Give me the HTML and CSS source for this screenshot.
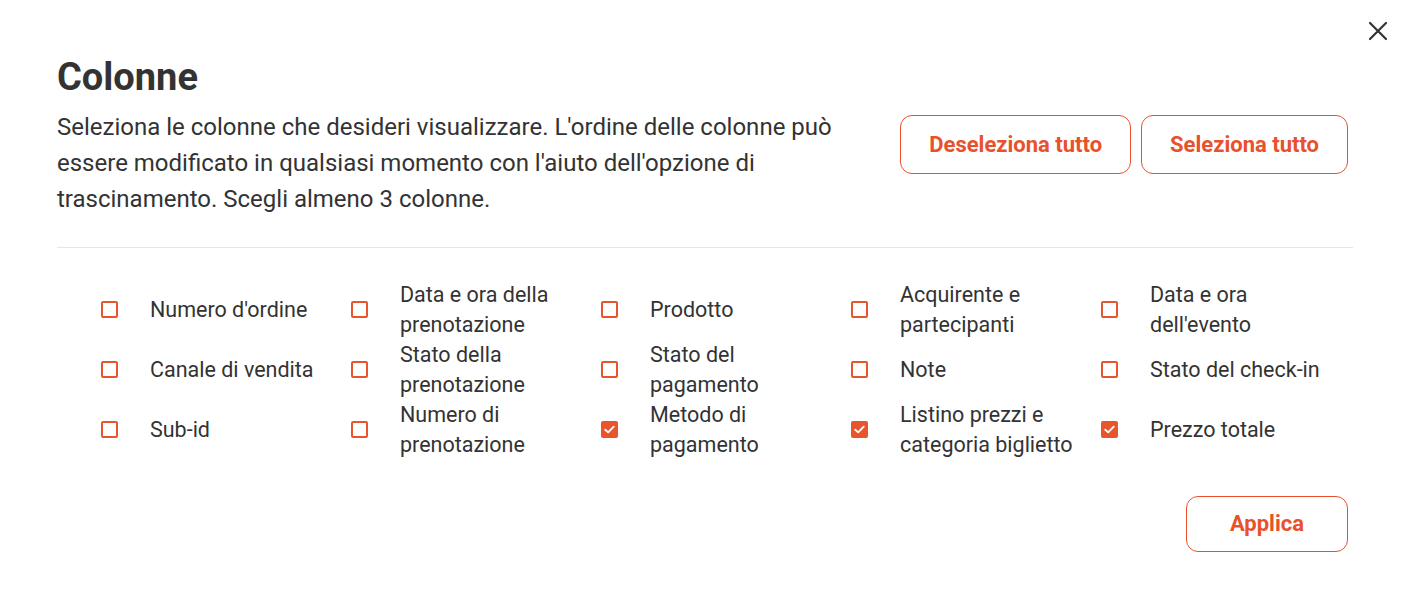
FILE: index.html
```html
<!DOCTYPE html>
<html>
<head>
	<title>Colonne</title>
	<link rel="stylesheet" href="styles.css">
</head>
<body>
	<div class="dialog">
		<button class="close" aria-label="Chiudi">
			<svg width="20" height="20" viewBox="0 0 20 20"><path d="M2 2 L18 18 M18 2 L2 18" stroke="#333" stroke-width="2.2" stroke-linecap="round"/></svg>
		</button>

		<h1 class="title">Colonne</h1>

		<div class="intro">
			<p class="desc">Seleziona le colonne che desideri visualizzare. L'ordine delle colonne può essere modificato in qualsiasi momento con l'aiuto dell'opzione di trascinamento. Scegli almeno 3 colonne.</p>
			<div class="actions">
				<button class="btn">Deseleziona tutto</button>
				<button class="btn">Seleziona tutto</button>
			</div>
		</div>

		<hr class="divider">

		<!-- Column options -->
		<div class="options">
			<label class="option"><span class="box"></span><span class="text">Numero d'ordine</span></label>
			<label class="option"><span class="box"></span><span class="text">Data e ora della prenotazione</span></label>
			<label class="option"><span class="box"></span><span class="text">Prodotto</span></label>
			<label class="option"><span class="box"></span><span class="text">Acquirente e partecipanti</span></label>
			<label class="option"><span class="box"></span><span class="text">Data e ora dell'evento</span></label>

			<label class="option"><span class="box"></span><span class="text">Canale di vendita</span></label>
			<label class="option"><span class="box"></span><span class="text">Stato della prenotazione</span></label>
			<label class="option"><span class="box"></span><span class="text">Stato del pagamento</span></label>
			<label class="option"><span class="box"></span><span class="text">Note</span></label>
			<label class="option"><span class="box"></span><span class="text">Stato del check-in</span></label>

			<label class="option"><span class="box"></span><span class="text">Sub-id</span></label>
			<label class="option"><span class="box"></span><span class="text">Numero di prenotazione</span></label>
			<label class="option"><span class="box checked"><svg width="18" height="18" viewBox="0 0 18 18"><path d="M4.5 9.2 L7.6 12 L13.5 6" fill="none" stroke="#fff" stroke-width="2" stroke-linecap="round" stroke-linejoin="round"/></svg></span><span class="text">Metodo di pagamento</span></label>
			<label class="option"><span class="box checked"><svg width="18" height="18" viewBox="0 0 18 18"><path d="M4.5 9.2 L7.6 12 L13.5 6" fill="none" stroke="#fff" stroke-width="2" stroke-linecap="round" stroke-linejoin="round"/></svg></span><span class="text">Listino prezzi e categoria biglietto</span></label>
			<label class="option"><span class="box checked"><svg width="18" height="18" viewBox="0 0 18 18"><path d="M4.5 9.2 L7.6 12 L13.5 6" fill="none" stroke="#fff" stroke-width="2" stroke-linecap="round" stroke-linejoin="round"/></svg></span><span class="text">Prezzo totale</span></label>
		</div>

		<div class="footer">
			<button class="btn btn-apply">Applica</button>
		</div>
	</div>
</body>
</html>
```
FILE: styles.css
```css
body {
	margin: 0;
	font-family: Roboto, "Liberation Sans", sans-serif;
	color: #333;
	background: #fff;
}

.dialog {
	position: relative;
	padding: 51px 58px 0 57px;
}

.close {
	position: absolute;
	top: 21px;
	right: 23px;
	width: 20px;
	height: 20px;
	padding: 0;
	border: none;
	background: none;
	cursor: pointer;
}

.title {
	margin: 0;
	font-size: 38px;
	line-height: 52px;
	font-weight: 700;
	color: #333;
}

.intro {
	display: flex;
	justify-content: space-between;
	align-items: flex-start;
}

.desc {
	margin: 6px 0 0 0;
	width: 800px;
	font-size: 24px;
	line-height: 36px;
}

.actions {
	display: flex;
	gap: 10px;
	margin-top: 12px;
	margin-right: 5px;
}

.btn {
	font-family: Roboto, "Liberation Sans", sans-serif;
	font-size: 22px;
	font-weight: 700;
	color: #e8512c;
	background: #fff;
	border: 1px solid #e8512c;
	border-radius: 12px;
	height: 59px;
	padding: 0 28px;
	cursor: pointer;
}

.divider {
	border: none;
	border-top: 1px solid #e6e6e6;
	margin: 29.5px 0 32px 0;
}

.options {
	display: grid;
	grid-template-columns: repeat(5, 250px);
	padding-left: 44px;
}

.option {
	display: flex;
	align-items: center;
	min-height: 59.5px;
	font-size: 21.5px;
	line-height: 30px;
	cursor: pointer;
}

.box {
	flex: none;
	width: 17px;
	height: 17px;
	box-sizing: border-box;
	border: 2px solid #e8542c;
	border-radius: 2px;
	margin-right: 32px;
	display: flex;
}

.box.checked {
	background: #e8542c;
	border: none;
}

.box svg {
	width: 17px;
	height: 17px;
}

.text {
	max-width: 182px;
}

.footer {
	display: flex;
	justify-content: flex-end;
	margin-top: 36px;
	margin-right: 5px;
}

.btn-apply {
	height: 56px;
	padding: 0 43px;
}
```
